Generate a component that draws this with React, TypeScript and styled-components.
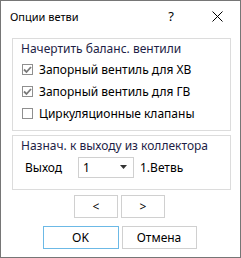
import React from 'react';
import styled, { createGlobalStyle } from 'styled-components';

const GlobalStyle = createGlobalStyle`
  html, body {
    margin: 0;
    padding: 0;
    background: #ffffff;
  }
  body {
    font-family: "Segoe UI", "Noto Sans", sans-serif;
  }
`

const Window = styled.div`
  width: 241px;
  height: 258px;
  box-sizing: border-box;
  border: 1px solid #767676;
  background: #ffffff;
  display: flex;
  flex-direction: column;
`

const TitleBar = styled.div`
  height: 30px;
  display: flex;
  align-items: center;
  padding-left: 9px;
  color: #000000;
  font-size: 11px;
`

const Title = styled.span`
  flex: 1;
`

const TitleButton = styled.span`
  width: 46px;
  display: flex;
  justify-content: center;
  align-items: center;
  font-size: 13px;
  color: #000000;
`

const Body = styled.div`
  display: flex;
  flex-direction: column;
  padding: 7px 9px 0 11px;
`

const Group = styled.div<{ $height: number; $top?: number }>`
  height: ${p => p.$height}px;
  margin-top: ${p => p.$top ?? 0}px;
  box-sizing: border-box;
  border: 1px solid #dcdcdc;
  padding: 0 0 0 8px;
  display: flex;
  flex-direction: column;
`

const GroupTitle = styled.div`
  font-size: 12px;
  color: #1e1e46;
  height: 19px;
  line-height: 19px;
  white-space: nowrap;
`

const CheckRow = styled.label`
  display: flex;
  align-items: center;
  height: 22px;
  font-size: 12px;
  color: #000000;
  gap: 6px;
  padding-left: 1px;
  white-space: nowrap;
`

const Box = styled.span`
  width: 11px;
  height: 11px;
  box-sizing: border-box;
  border: 1px solid #8f8f8f;
  display: flex;
  align-items: center;
  justify-content: center;
  background: #ffffff;
`

const OutputRow = styled.div`
  display: flex;
  align-items: center;
  height: 22px;
  margin-top: 1px;
  font-size: 12px;
  color: #000000;
  white-space: nowrap;
`

const OutputLabel = styled.span`
  width: 57px;
  padding-left: 4px;
  box-sizing: border-box;
`

const Select = styled.div`
  width: 56px;
  height: 21px;
  box-sizing: border-box;
  border: 1px solid #d0d0d0;
  display: flex;
  align-items: center;
  justify-content: space-between;
  padding: 0 6px 0 4px;
  margin-right: 6px;
`

const ButtonRow = styled.div<{ $top: number }>`
  display: flex;
  justify-content: center;
  gap: 3px;
  margin-top: ${p => p.$top}px;
  padding-right: 4px;
`

const Button = styled.div<{ $width: number; $default?: boolean }>`
  width: ${p => p.$width}px;
  height: 23px;
  box-sizing: border-box;
  border: 1px solid ${p => (p.$default ? '#6cb9e6' : '#d0d0d0')};
  background: #ffffff;
  display: flex;
  align-items: center;
  justify-content: center;
  font-size: 12px;
  color: #000000;
`

const Check = () => (
  <svg width="9" height="9" viewBox="0 0 9 9">
    <path d="M1 4.5 L3.5 7 L8 2" fill="none" stroke="#7a7a7a" strokeWidth="1.8" />
  </svg>
)

const CheckItem: React.FC<{ checked?: boolean; label: string }> = ({ checked, label }) => (
  <CheckRow>
    <Box>{checked && <Check />}</Box>
    {label}
  </CheckRow>
)

const App: React.FC = () => {
  return (
    <>
      <GlobalStyle />
      <Window>
        <TitleBar>
          <Title>Опции ветви</Title>
          <TitleButton>?</TitleButton>
          <TitleButton>
            <svg width="11" height="11" viewBox="0 0 11 11">
              <path d="M0.5 0.5 L10.5 10.5 M10.5 0.5 L0.5 10.5" stroke="#000" strokeWidth="1" />
            </svg>
          </TitleButton>
        </TitleBar>
        <Body>
          <Group $height={93}>
            <GroupTitle>Начертить баланс. вентили</GroupTitle>
            <CheckItem checked label="Запорный вентиль для ХВ" />
            <CheckItem checked label="Запорный вентиль для ГВ" />
            <CheckItem label="Циркуляционные клапаны" />
          </Group>
          <Group $height={55} $top={4}>
            <GroupTitle>Назнач. к выходу из коллектора</GroupTitle>
            <OutputRow>
              <OutputLabel>Выход</OutputLabel>
              <Select>
                <span>1</span>
                <svg width="7" height="4" viewBox="0 0 7 4">
                  <path d="M0 0 L7 0 L3.5 4 Z" fill="#333" />
                </svg>
              </Select>
              <span>1.Ветвь</span>
            </OutputRow>
          </Group>
          <ButtonRow $top={5}>
            <Button $width={44}>&lt;</Button>
            <Button $width={44}>&gt;</Button>
          </ButtonRow>
          <ButtonRow $top={8}>
            <Button $width={76} $default>OK</Button>
            <Button $width={75}>Отмена</Button>
          </ButtonRow>
        </Body>
      </Window>
    </>
  );
};

export default App;
